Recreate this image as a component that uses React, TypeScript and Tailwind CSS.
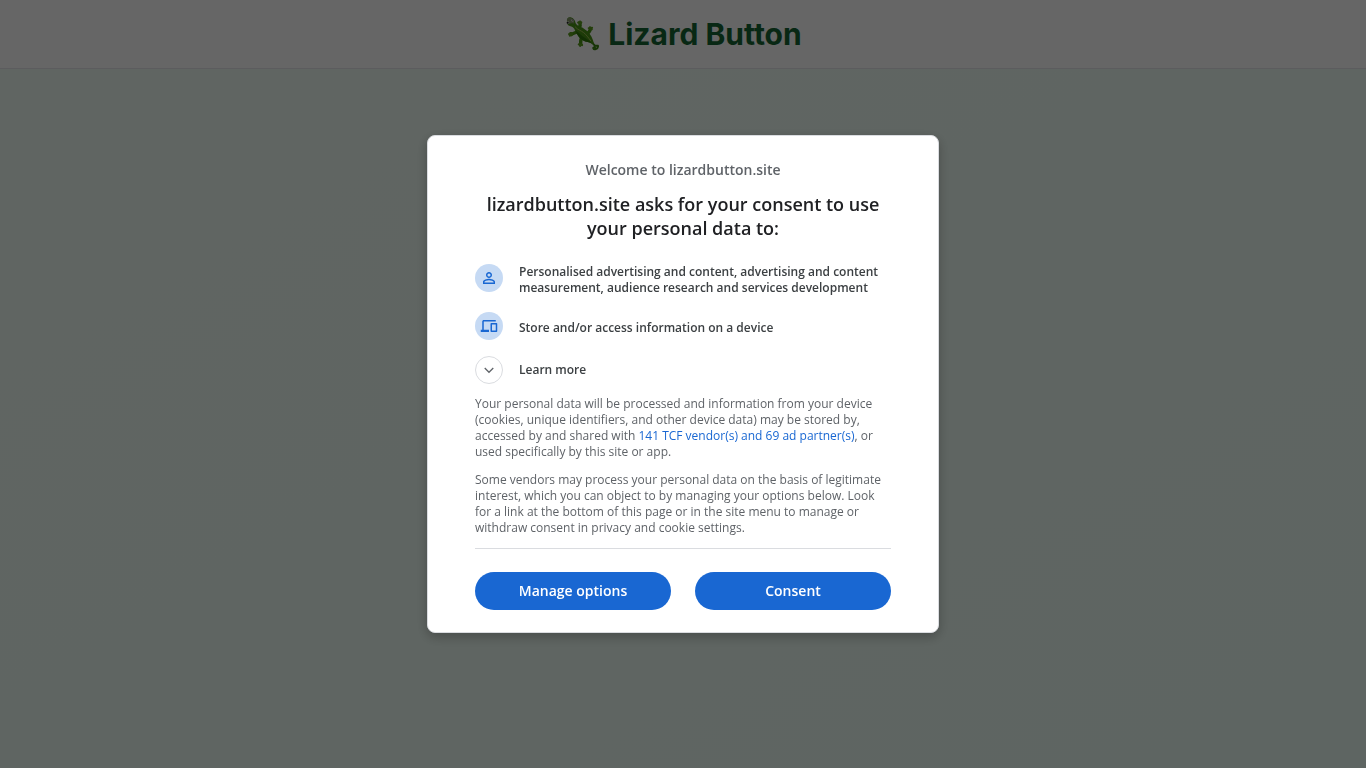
import { useState } from 'react';
import { MdPersonOutline } from 'react-icons/md';

function LizardIcon({ className }: { className?: string }) {
  return (
    <svg viewBox="0 0 108 108" className={className} fill="none" aria-hidden="true">
      {/* legs */}
      <g stroke="#4a9416" strokeLinecap="round" strokeLinejoin="round" strokeWidth="10">
        <path d="M38 38 C46 36 50 32 48 23" />
        <path d="M42 48 C34 48 30 52 23 55" />
        <path d="M66 54 C74 52 77 47 79 40" />
        <path d="M56 62 C50 68 49 74 50 83" />
      </g>
      {/* feet */}
      <g fill="#5c9e1f">
        <path d="M40 18 C42 15 45 17 46 15 C47 11 50 13 51 16 C55 15 56 19 54 22 C53 26 45 27 43 23 C40 23 38 20 40 18 Z" />
        <path d="M24 48 C19 47 16 48 15 51 C11 52 11 56 14 57 C14 62 18 64 21 61 C27 63 29 51 24 48 Z" />
        <path d="M74 40 C70 38 70 34 74 34 C75 30 80 29 82 33 C87 31 89 35 86 37 C88 41 85 44 81 43 Z" />
        <path d="M45 81 C40 83 40 88 44 88 C45 93 50 95 52 90 C57 92 59 87 56 83 Z" />
      </g>
      {/* tail */}
      <path
        d="M78 70 C85 75 86 86 93 89 C98 91 103 86 102 92 C101 100 90 102 88 97 C87 94 91 93 93 95"
        stroke="#37820f"
        strokeWidth="6"
        strokeLinecap="round"
        strokeLinejoin="round"
      />
      {/* body */}
      <path
        d="M9 16 C7 8 13 2 20 4 C28 6 33 12 35 22 C40 31 50 31 60 38 C74 46 82 58 87 73 C89 79 89 85 85 84 C77 78 66 79 56 73 C45 67 39 56 33 43 C30 34 24 31 17 30 C10 28 8 22 9 16 Z"
        fill="#4a9416"
      />
      <path d="M33 43 C39 56 45 67 56 73 C66 79 77 78 85 84 C77 70 56 65 45 51 Z" fill="#2f760c" />
      <path d="M9 15 C8 8 14 3 20 5 C28 8 33 17 30 23 C24 19 16 25 12 23 Z" fill="#84976a" />
      <path d="M34 33 C42 43 51 43 59 50 C67 56 72 64 80 74" stroke="#a1bd55" strokeWidth="3" strokeLinecap="round" />
      {/* eyes */}
      <circle cx="12" cy="20" r="4" fill="#d6dfca" />
      <circle cx="11" cy="20" r="3" fill="#222" />
      <circle cx="26" cy="13" r="4" fill="#d6dfca" />
      <circle cx="27" cy="12" r="2" fill="#222" />
    </svg>
  );
}

function DevicesIcon({ className }: { className?: string }) {
  return (
    <svg viewBox="0 0 24 24" className={className} fill="currentColor" aria-hidden="true">
      <path d="M5 6h16V4H5c-1.1 0-2 .9-2 2v11H1v3h11v-3H5V6zM22 8h-7c-.55 0-1 .45-1 1v10c0 .55.45 1 1 1h7c.55 0 1-.45 1-1V9c0-.55-.45-1-1-1zm-1 10h-5v-8h5v8z" />
    </svg>
  );
}

function ChevronIcon({ className }: { className?: string }) {
  return (
    <svg viewBox="0 0 24 24" className={className} fill="none" stroke="currentColor" strokeWidth="1.7" aria-hidden="true">
      <path d="M6.3 9.3l5.7 5.7 5.7-5.7" />
    </svg>
  );
}

const purposes = [
  {
    icon: MdPersonOutline,
    text: 'Personalised advertising and content, advertising and content measurement, audience research and services development',
    textClass: '',
  },
  {
    icon: DevicesIcon,
    text: 'Store and/or access information on a device',
    textClass: 'pt-2',
  },
];

function Header() {
  return (
    <header className="bg-white border-b border-gray-200 py-4">
      <h1 className="flex items-center justify-center gap-2 text-3xl leading-9 font-bold text-[#166534] font-['Inter',sans-serif]">
        <LizardIcon className="size-9" />
        Lizard Button
      </h1>
    </header>
  );
}

function ConsentDialog({ onClose }: { onClose: () => void }) {
  const [expanded, setExpanded] = useState(false);

  return (
    <div className="fixed inset-0 flex items-center justify-center bg-black/60 font-['Open_Sans',sans-serif]">
      <div
        role="dialog"
        aria-modal="true"
        aria-labelledby="consent-title"
        className="w-full max-w-lg rounded-lg border border-[#dadce0] bg-white px-[47px] pt-6 pb-[22px] shadow-[0_4px_12px_rgba(0,0,0,0.25)]"
      >
        <p className="text-center text-sm font-semibold text-[#5f6368]">Welcome to lizardbutton.site</p>
        <h2 id="consent-title" className="mt-3 text-center text-lg leading-6 font-semibold text-[#202124]">
          lizardbutton.site asks for your consent to use your personal data to:
        </h2>

        <ul className="mt-6 flex flex-col gap-4">
          {purposes.map(({ icon: Icon, text, textClass }) => (
            <li key={text} className="flex items-start gap-4">
              <span className="flex size-7 shrink-0 items-center justify-center rounded-full bg-[#c6daf4] text-[#1967d2]">
                <Icon className="size-[18px]" />
              </span>
              <div className={textClass}>
                <p className="text-xs font-semibold text-[#3c4043]">{text}</p>
              </div>
            </li>
          ))}
        </ul>

        <button
          type="button"
          aria-expanded={expanded}
          onClick={() => setExpanded(!expanded)}
          className="mt-4 flex items-center gap-4 text-xs font-semibold text-[#3c4043]"
        >
          <span className="flex size-7 items-center justify-center rounded-full border border-[#dadce0]">
            <ChevronIcon className="size-[18px] text-[#5f6368]" />
          </span>
          Learn more
        </button>

        <div className="mt-3 flex flex-col gap-3 border-b border-[#dadce0] pb-3 text-xs text-[#5f6368]">
          <p>
            Your personal data will be processed and information from your device (cookies, unique identifiers, and
            other device data) may be stored by, accessed by and shared with{' '}
            <a href="#vendors" className="text-[#1967d2]">141 TCF vendor(s) and 69 ad partner(s)</a>, or used
            specifically by this site or app.
          </p>
          <p>
            Some vendors may process your personal data on the basis of legitimate interest, which you can object to by
            managing your options below. Look for a link at the bottom of this page or in the site menu to manage or
            withdraw consent in privacy and cookie settings.
          </p>
        </div>

        <div className="mt-[23px] grid grid-cols-2 gap-6">
          <button type="button" className="h-[38px] rounded-full bg-[#1967d2] text-sm font-semibold text-white">
            Manage options
          </button>
          <button
            type="button"
            onClick={onClose}
            className="h-[38px] rounded-full bg-[#1967d2] text-sm font-semibold text-white"
          >
            Consent
          </button>
        </div>
      </div>
    </div>
  );
}

export default function App() {
  const [open, setOpen] = useState(true);

  return (
    <div className="min-h-screen bg-gradient-to-br from-green-50 to-emerald-50">
      <Header />
      {open && <ConsentDialog onClose={() => setOpen(false)} />}
    </div>
  );
}
